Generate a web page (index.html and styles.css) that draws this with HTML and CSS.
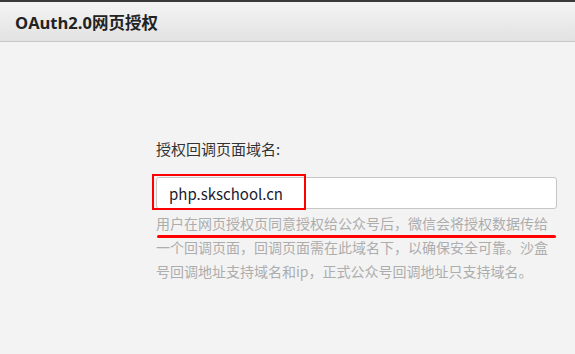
FILE: index.html
```html
<!DOCTYPE html>
<html lang="zh-CN">
<head>
    <meta charset="UTF-8">
    <title>OAuth2.0网页授权</title>
    <link rel="stylesheet" href="styles.css">
</head>
<body>
    <div class="topline"></div>
    <div class="header">
        <h3>OAuth2.0网页授权</h3>
    </div>
    <div class="content">
        <div class="form-group">
            <label class="form-label">授权回调页面域名:</label>
            <div class="input-wrap">
                <input class="form-input" type="text" value="php.skschool.cn">
                <span class="mark-box"></span>
            </div>
            <p class="help">用户在网页授权页同意授权给公众号后，微信会将授权数据传给一个回调页面，回调页面需在此域名下，以确保安全可靠。沙盒号回调地址支持域名和ip，正式公众号回调地址只支持域名。</p>
            <span class="mark-line"></span>
        </div>
    </div>
</body>
</html>
```

FILE: styles.css
```css
* {
    margin: 0;
    padding: 0;
    box-sizing: border-box;
}
body {
    background: #f3f3f3;
    font-family: "Noto Sans CJK SC", "Open Sans", sans-serif;
    color: #333;
    height: 354px;
    overflow: hidden;
}
.topline {
    height: 2px;
    background: #3a3a3a;
}
.header {
    height: 40px;
    background: linear-gradient(to bottom, #f4f4f4, #e2e2e2);
    border-bottom: 1px solid #c8c8c8;
    padding-left: 15px;
    display: flex;
    align-items: center;
}
.header h3 {
    font-family: "Open Sans", "Noto Sans CJK SC", sans-serif;
    font-size: 16.5px;
    font-weight: bold;
    color: #222;
}
.content {
    padding-top: 96px;
}
.form-group {
    position: relative;
    width: 401px;
    margin-left: 156px;
}
.form-label {
    display: block;
    font-size: 15px;
    line-height: 22px;
    color: #333;
}
.input-wrap {
    position: relative;
    margin-top: 17px;
}
.form-input {
    display: block;
    width: 100%;
    height: 32px;
    border: 1px solid #c6c6c6;
    border-radius: 3px;
    background: #fff;
    padding: 0 12px;
    font-family: "Noto Sans CJK SC", sans-serif;
    font-size: 15px;
    color: #1a1a2e;
}
.mark-box {
    position: absolute;
    left: -4px;
    top: -3px;
    width: 154px;
    height: 36px;
    border: 2px solid #f00;
}
.help {
    margin-top: 2px;
    font-size: 14px;
    line-height: 24px;
    color: #adadad;
}
.mark-line {
    position: absolute;
    left: 1px;
    right: 1px;
    top: 97px;
    height: 3px;
    background: #f00;
    border-radius: 2px;
}
```
